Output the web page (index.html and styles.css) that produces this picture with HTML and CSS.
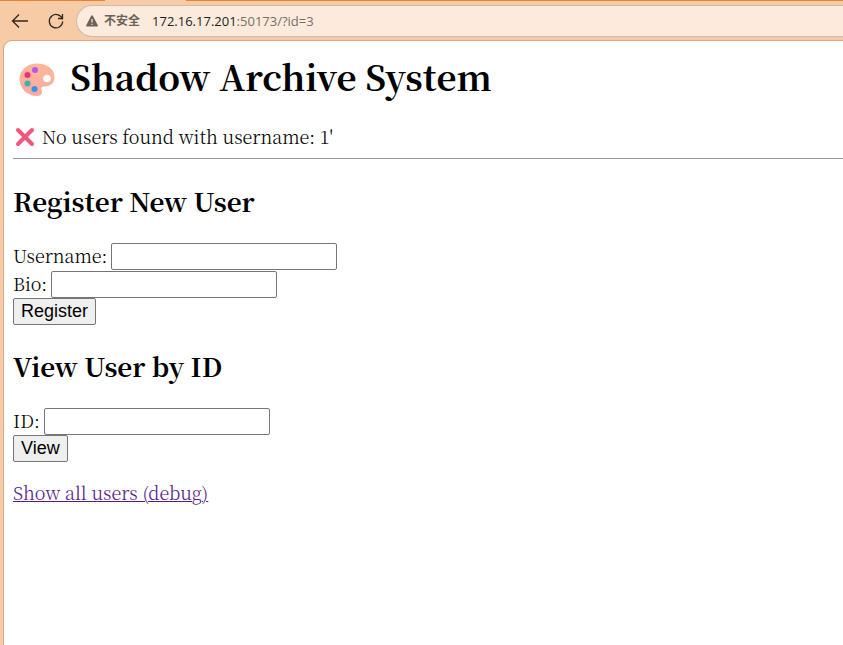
FILE: index.html
```html
<!DOCTYPE html>
<html lang="en">
<head>
<meta charset="utf-8">
<title>Shadow Archive System</title>
<link rel="stylesheet" href="styles.css">
</head>
<body>
<div class="tab-strip"><span class="active-tab"></span></div>
<header class="toolbar">
  <button class="nav-button" type="button" aria-label="Back">
    <svg width="18" height="18" viewBox="0 0 18 18"><path d="M17 9H1.500M8 2.500L1.500 9L8 15.500"/></svg>
  </button>
  <button class="nav-button" type="button" aria-label="Reload">
    <svg width="18" height="18" viewBox="0 0 18 18"><path d="M15.500 7.500A6.700 6.700 0 1 0 15.700 9.500M15.500 2V6.500H11"/></svg>
  </button>
  <div class="address">
    <svg class="warning" width="12" height="12" viewBox="0 0 12 12"><path d="M5.200.8Q6 -.3 6.800.8L11.800 10.200Q12.200 11.500 11 11.500H1Q-.2 11.500.2 10.200Z" fill="#6b635b"/><path d="M6 4V7.500M6 8.700V9.900" stroke="#fcebdc" stroke-width="1.200"/></svg>
    <span class="security">不安全</span>
    <span class="url"><span class="host">172.16.17.201</span>:50173/?id=3</span>
  </div>
</header>
<main class="page">
  <h1>
    <svg class="palette" width="36" height="34" viewBox="0 0 36 34">
      <defs><linearGradient id="skin" x1="0" y1="0" x2="0" y2="1"><stop offset="0" stop-color="#ffb898"/><stop offset="1" stop-color="#f6aaa2"/></linearGradient></defs>
      <path fill="url(#skin)" d="M18 .5C28 .5 35.500 6 35.500 14C35.500 20 31 23.500 26 23.500C23 23.500 21.500 24.500 22.500 27C23.500 30 22.500 33 18 33C8 33 .5 25 .5 16C.5 7 8 .5 18 .5Z"/>
      <circle cx="28" cy="15.500" r="3.800" fill="#fff"/>
      <circle cx="16" cy="7" r="3" fill="#b458f0"/><circle cx="8.500" cy="12" r="3" fill="#f02f83"/><circle cx="8.500" cy="20.500" r="3" fill="#3db5a6"/><circle cx="15.500" cy="26" r="3" fill="#3c8df0"/>
    </svg>
    <span>Shadow Archive System</span>
  </h1>
  <p class="message">
    <svg class="cross" width="20" height="20" viewBox="0 0 20 20"><path d="M3 3L17 17M17 3L3 17" stroke="#f4557b" stroke-width="4" stroke-linecap="round"/></svg>
    <span>No users found with username: 1'</span>
  </p>
  <hr>
  <h2>Register New User</h2>
  <form>
    <div class="field"><label for="username">Username:</label><input id="username" type="text"></div>
    <div class="field"><label for="bio">Bio:</label><input id="bio" type="text"></div>
    <button class="action" type="button">Register</button>
  </form>
  <h2>View User by ID</h2>
  <form>
    <div class="field"><label for="user-id">ID:</label><input id="user-id" type="text"></div>
    <button class="action" type="button">View</button>
  </form>
  <p class="debug"><a href="#">Show all users (debug)</a></p>
</main>
</body>
</html>
```
FILE: styles.css
```css
* {
  box-sizing: border-box;
}

body {
  margin: 0;
  min-height: 100vh;
  display: flex;
  flex-direction: column;
  background: #f6cba5;
  color: #000;
  font: 300 18px/25px "Noto Serif CJK SC", "Source Han Serif SC", "Liberation Serif", serif;
}

.tab-strip {
  height: 1px;
  padding-left: 105px;
  background: #e48434;
}

.active-tab {
  display: block;
  width: 81px;
  height: 1px;
  background: #f6cba5;
}

.toolbar {
  display: flex;
  align-items: center;
  height: 40px;
  padding-left: 11px;
}

.nav-button {
  display: flex;
  width: 18px;
  margin-right: 18px;
  padding: 0;
  border: 0;
  background: none;
}

.nav-button svg {
  fill: none;
  stroke: #30281f;
  stroke-width: 1.3;
}

.address {
  flex: 1;
  display: flex;
  align-items: center;
  height: 32px;
  margin-left: -7px;
  padding-left: 9px;
  border: 1px solid #cbbbb0;
  border-right: 0;
  border-radius: 16px 0 0 16px;
  background: #fcebdc;
  color: #776e66;
  font: 13px/20px "Open Sans", "Noto Sans CJK SC", sans-serif;
}

.security {
  margin: 0 12px 0 6px;
  color: #6b635b;
  font-size: 12px;
  font-weight: 700;
}

.host {
  color: #221e1b;
}

.page {
  flex: 1;
  margin-left: 4px;
  padding: 10px 0 8px 9px;
  outline: 1px solid #d6ab85;
  border-radius: 8px 0 0 0;
  background: #fff;
}

h1 {
  display: flex;
  align-items: center;
  gap: 15px;
  margin: 0 0 23px;
  padding-left: 6px;
  font-size: 35px;
  font-weight: 700;
  line-height: 50px;
}

.palette {
  margin-top: 8px;
}

.message {
  display: flex;
  align-items: center;
  gap: 7px;
  margin: 0;
  padding-left: 2px;
}

hr {
  margin: 9px 0 22px;
  border: 0;
  border-top: 1px solid #999;
}

h2 {
  margin: 0 0 22px;
  font-size: 26px;
  font-weight: 700;
  line-height: 40px;
}

form {
  margin-bottom: 21px;
}

.field {
  display: flex;
  align-items: flex-start;
  gap: 4px;
}

.field + .field {
  margin-top: 1px;
}

input {
  width: 226px;
  height: 27px;
  padding: 1px 2px;
  border: 1px solid #767676;
  border-radius: 2px;
  font: 18px "Liberation Sans", sans-serif;
}

.action {
  display: block;
  height: 27px;
  padding: 0 7px 2px;
  border: 1px solid #767676;
  border-radius: 2px;
  background: #efefef;
  color: #000;
  font: 18px/20px "Liberation Sans", sans-serif;
}

.debug {
  margin: -3px 0 0;
}

a {
  color: #551a8b;
  text-decoration-thickness: 1px;
}
```
